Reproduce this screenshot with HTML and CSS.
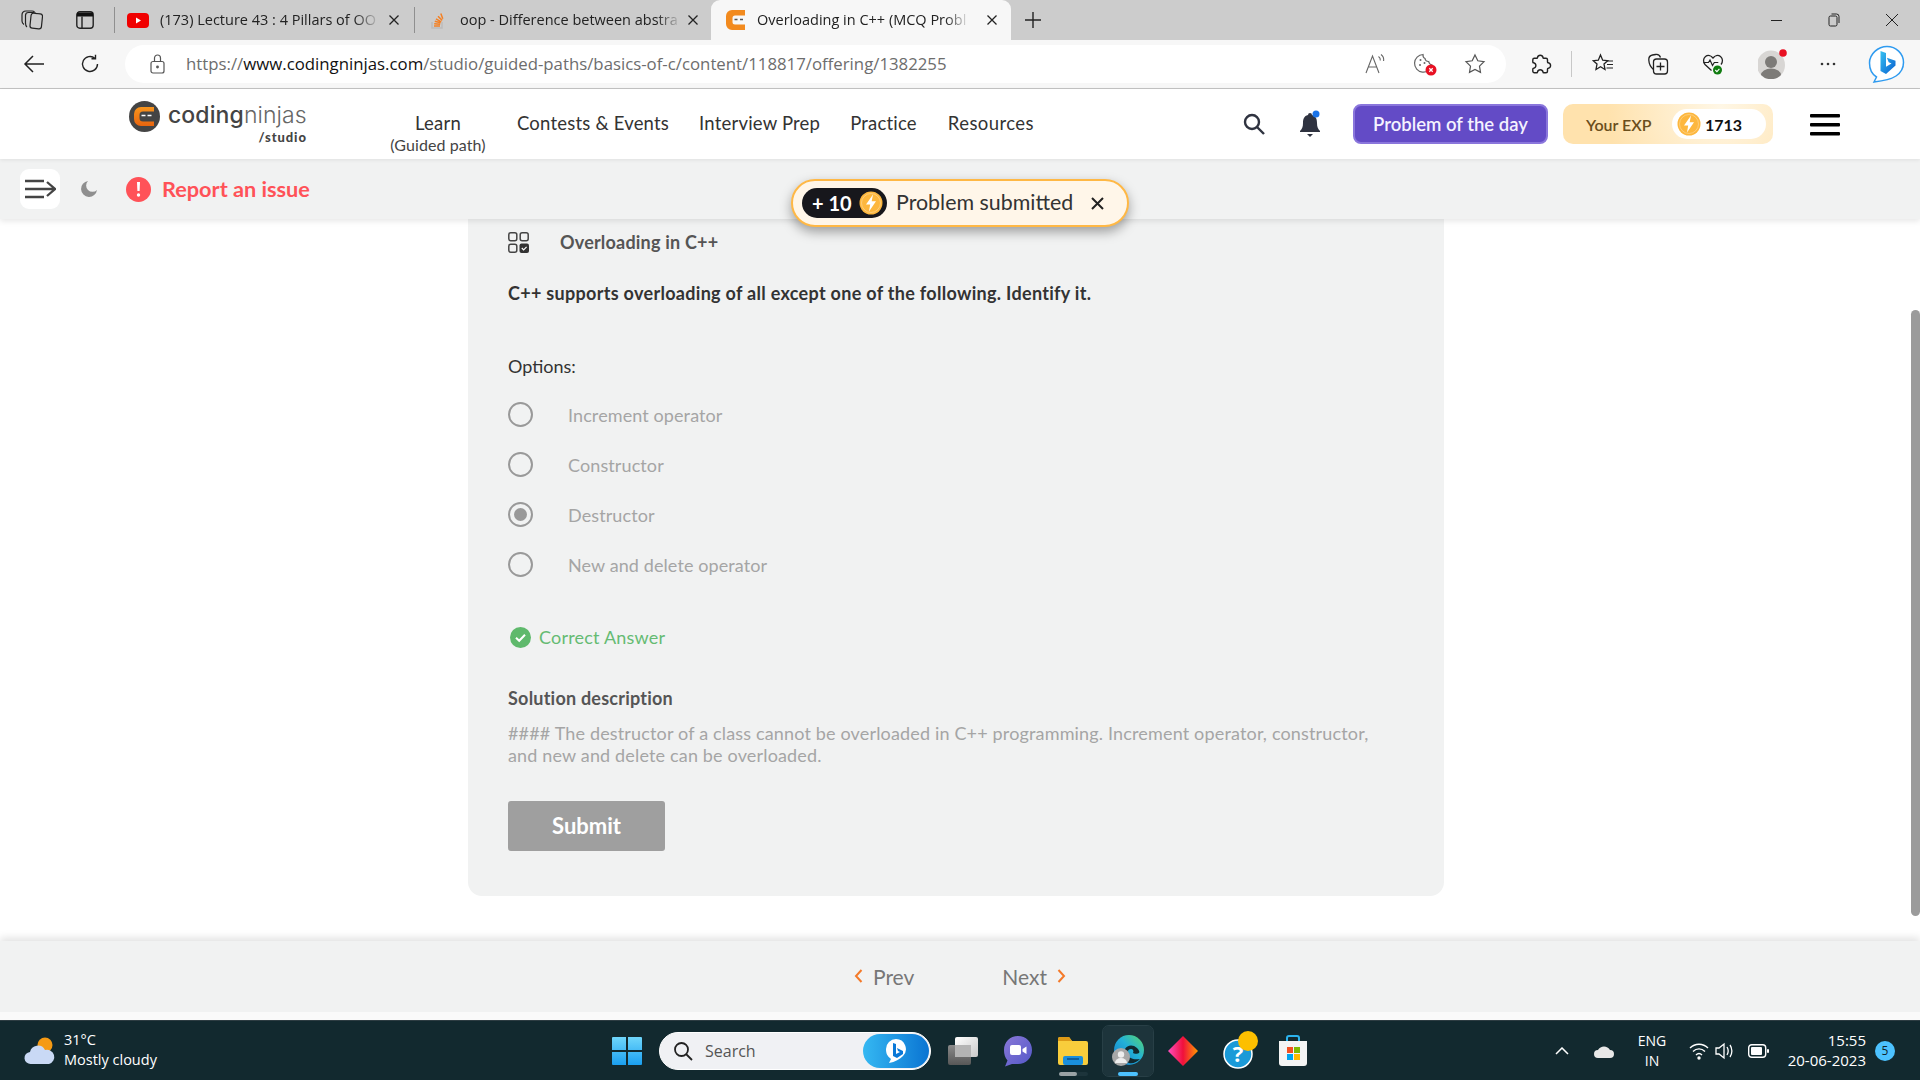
FILE: index.html
```html
<!DOCTYPE html>
<html lang="en">
<head>
<meta charset="utf-8">
<title>Overloading in C++ (MCQ Problem)</title>
<link rel="stylesheet" href="styles.css">
</head>
<body>
<svg class="defs" width="0" height="0" aria-hidden="true">
  <defs>
    <linearGradient id="logoOrange" x1="0" y1="0" x2="0" y2="1"><stop offset="0" stop-color="#f7941d"/><stop offset="1" stop-color="#e8650f"/></linearGradient>
    <linearGradient id="bingBlue" x1="0" y1="0" x2="1" y2="1"><stop offset="0" stop-color="#35c1f1"/><stop offset="1" stop-color="#0a5fd0"/></linearGradient>
    <linearGradient id="edgeG" x1="0" y1="1" x2="1" y2="0"><stop offset="0" stop-color="#1277c9"/><stop offset=".55" stop-color="#22b0d8"/><stop offset="1" stop-color="#5ad86a"/></linearGradient>
    <linearGradient id="winG" x1="0" y1="0" x2="0" y2="1"><stop offset="0" stop-color="#6fd6fb"/><stop offset="1" stop-color="#1a9ff0"/></linearGradient>
    <linearGradient id="diaG" x1="0" y1="0" x2="1" y2="0"><stop offset="0" stop-color="#ff4fc0"/><stop offset=".5" stop-color="#f0103c"/><stop offset="1" stop-color="#ff9a00"/></linearGradient>
    <linearGradient id="teamsG" x1="0" y1="0" x2="1" y2="1"><stop offset="0" stop-color="#8a78d8"/><stop offset="1" stop-color="#5358c8"/></linearGradient>
    <linearGradient id="glassA" x1="0" y1="0" x2="1" y2="1"><stop offset="0" stop-color="#ffffff"/><stop offset="1" stop-color="#c9c9c9"/></linearGradient>
    <linearGradient id="glassB" x1="0" y1="0" x2="0" y2="1"><stop offset="0" stop-color="#8a8a8a"/><stop offset="1" stop-color="#575757"/></linearGradient>
    <g id="bolt"><circle cx="12" cy="12" r="11.500" fill="#fdb73e"/><circle cx="12" cy="12" r="9.500" fill="none" stroke="#fff" stroke-opacity=".3"/><path d="M14 3.500 7 13.500h4.200L10 20.500l7-10.200h-4.300z" fill="#fff"/></g>
  </defs>
</svg>

<header class="tabstrip">
  <span class="strip-icon"><svg width="22" height="20" viewBox="0 0 22 20" fill="none" stroke="#222" stroke-width="1.200"><rect x="9.500" y="3.500" width="11.500" height="15" rx="2.500" transform="rotate(6 15 11)"/><path d="M6 17C4.500 16 4.500 15 4.500 13V5.500C4.500 3.500 5.500 2.500 7.500 2.500h5c1.500 0 2.300.5 3 1.500"/><path d="M3 14.500C1.500 13.500 1 12.500 1 11V5C1 2.500 2.500 1 5 1h6c1 0 1.800.2 2.500.8"/></svg></span>
  <span class="strip-icon strip-icon-second"><svg width="18" height="18" viewBox="0 0 18 18" fill="none" stroke="#222" stroke-width="1.400"><rect x=".8" y=".8" width="16.400" height="16.400" rx="3"/><path d="M1 3.500h16" stroke-width="4" stroke="#111"/><path d="M6 5.500v11.500"/></svg></span>
  <span class="tab-sep"></span>
  <div class="tab tab-yt">
    <svg class="favicon" width="22" height="15" viewBox="0 0 22 15"><rect width="22" height="15" rx="4" fill="#f00000"/><path d="M9 4.500v6l5-3z" fill="#fff"/></svg>
    <span class="tab-title">(173) Lecture 43 : 4 Pillars of OO</span>
    <svg class="tab-x" width="12" height="12" viewBox="0 0 12 12" stroke="#222" stroke-width="1.300"><path d="M1.500 1.500l9 9M10.500 1.500l-9 9"/></svg>
  </div>
  <span class="tab-sep"></span>
  <div class="tab tab-so">
    <svg class="favicon" width="16" height="18" viewBox="0 0 16 18" fill="none"><path d="M2 11v6h10v-6" stroke="#bcbbbb" stroke-width="1.500"/><path d="M4 15h6M4.200 12.700l6 .6M4.800 10.300l5.800 1.500M6 7.800l5.200 3M8 5.200l4.200 4.200M10.800 2.500l2 5.300" stroke="#f48024" stroke-width="1.500"/></svg>
    <span class="tab-title">oop - Difference between abstra</span>
    <svg class="tab-x" width="12" height="12" viewBox="0 0 12 12" stroke="#222" stroke-width="1.300"><path d="M1.500 1.500l9 9M10.500 1.500l-9 9"/></svg>
  </div>
  <div class="tab tab-active">
    <svg class="favicon" width="19" height="20" viewBox="0 0 19 20"><path d="M6 0h13v5.500H9A2.500 2.500 0 0 0 6.500 8v4A2.500 2.500 0 0 0 9 14.500h10V20H6a6 6 0 0 1-6-6V6a6 6 0 0 1 6-6z" fill="#f28a1e"/><path d="M8.500 9.500h3M14 9.500h3" stroke="#555" stroke-width="1.300"/></svg>
    <span class="tab-title">Overloading in C++ (MCQ Probl</span>
    <svg class="tab-x" width="12" height="12" viewBox="0 0 12 12" stroke="#222" stroke-width="1.300"><path d="M1.500 1.500l9 9M10.500 1.500l-9 9"/></svg>
  </div>
  <svg class="new-tab" width="16" height="16" viewBox="0 0 16 16" stroke="#222" stroke-width="1.400"><path d="M8 0v16M0 8h16"/></svg>
  <div class="window-controls">
    <svg width="12" height="12" viewBox="0 0 12 12" stroke="#222"><path d="M0 6.500h11"/></svg>
    <svg width="14" height="14" viewBox="0 0 14 14" fill="none" stroke="#222"><rect x="2" y="3" width="8" height="10" rx="1.500"/><path d="M4.500 1h5a2.500 2.500 0 0 1 2.500 2.500V10"/></svg>
    <svg width="14" height="14" viewBox="0 0 14 14" stroke="#222"><path d="M1 1l12 12M13 1 1 13"/></svg>
  </div>
</header>

<div class="addressbar">
  <span class="nav-btn"><svg width="22" height="20" viewBox="0 0 22 20" fill="none" stroke="#222" stroke-width="1.500"><path d="M21 10H2M10 2l-8 8 8 8"/></svg></span>
  <span class="nav-btn nav-btn-refresh"><svg width="20" height="20" viewBox="0 0 20 20" fill="none" stroke="#222" stroke-width="1.400"><path d="M17.500 10a7.500 7.500 0 1 1-2.500-5.600M15.500 0.800v4h-4"/></svg></span>
  <div class="urlpill">
    <svg class="lock" width="15" height="20" viewBox="0 0 15 20" fill="none" stroke="#555" stroke-width="1.200"><rect x="1" y="7.500" width="13" height="11.500" rx="2"/><path d="M4.500 7.500V4a3 3 0 0 1 6 0v3.500"/><circle cx="7.500" cy="13" r=".8" fill="#555"/></svg>
    <span class="url">https://<b>www.codingninjas.com</b>/studio/guided-paths/basics-of-c/content/118817/offering/1382255</span>
    <div class="pill-tools">
      <svg width="22" height="22" viewBox="0 0 22 22" fill="none" stroke="#666" stroke-width="1.100"><path d="M2 20 8.500 3l6.500 17M4.500 14h8"/><path d="M14.500 3.500c1.500 1 2 2.500 1.800 4M17 1.500c2 1.500 3 4 2.600 6.500"/></svg>
      <svg width="24" height="24" viewBox="0 0 24 24" fill="none"><path d="M10 2.500a8.800 8.800 0 1 0 9 10.500c-2-.5-3-1.500-3.300-3.500-2 .2-3.500-1-3.700-3-1.500-.8-2.200-2.200-2-4z" stroke="#666" stroke-width="1.200"/><circle cx="7.500" cy="8" r="1" fill="#666"/><circle cx="7" cy="13" r="1" fill="#666"/><circle cx="11.500" cy="11" r="1" fill="#666"/><circle cx="18" cy="18" r="5.500" fill="#e81123"/><path d="M16.300 16.300l3.400 3.400M19.700 16.300l-3.400 3.400" stroke="#fff" stroke-width="1.300"/></svg>
      <svg width="22" height="22" viewBox="0 0 22 22" fill="none" stroke="#555" stroke-width="1.200"><path d="m11 2 2.800 5.800 6.200.9-4.500 4.400 1 6.300L11 16.400 5.500 19.400l1-6.300L2 8.700l6.200-.9z"/></svg>
    </div>
  </div>
  <div class="tools">
    <span class="tool"><svg width="22" height="22" viewBox="0 0 22 22" fill="none" stroke="#222" stroke-width="1.400"><path d="M7.500 4.500a2.800 2.800 0 0 1 5.500 0c0 .5.3.8.8.8h2.200a1.500 1.500 0 0 1 1.500 1.500v2.200c0 .5.300.8.800.8a2.800 2.800 0 0 1 0 5.500c-.5 0-.8.3-.8.8v2.200a1.500 1.500 0 0 1-1.500 1.500h-2.200c-.5 0-.8-.3-.8-.8a2.800 2.800 0 0 0-5.500 0c0 .5-.3.8-.8.8H4.300a1.500 1.500 0 0 1-1.500-1.500v-2.200c0-.5.3-.8.8-.8a2.800 2.800 0 0 0 0-5.500c-.5 0-.8-.3-.8-.8V6.800a1.500 1.500 0 0 1 1.500-1.500h2.400c.5 0 .8-.3.800-.8z"/></svg></span>
    <span class="tool-sep"></span>
    <span class="tool"><svg width="22" height="22" viewBox="0 0 22 22" fill="none" stroke="#222" stroke-width="1.300"><path d="m8.500 2 2.200 5.200 5 .5-3.700 3.400 1 5.400-4.500-2.800L4 16.500l1-5.400L1.300 7.700l5-.5z"/><path d="M15 8h6M15 11.500h6M14.500 15h6.500" stroke-width="1.200"/></svg></span>
    <span class="tool"><svg width="22" height="22" viewBox="0 0 22 22" fill="none" stroke="#222" stroke-width="1.300"><path d="M6.500 16.500C3.500 14 2 11 1.800 7c-.2-3 1-4.500 3.700-5l3-.5c2.500-.4 4.300.7 5 3"/><rect x="6.500" y="6" width="14" height="15" rx="3"/><path d="M13.500 9.500v8M9.500 13.500h8"/></svg></span>
    <span class="tool"><svg width="22" height="22" viewBox="0 0 22 22" fill="none"><path d="M9.500 17.500 3 11.500C1 9 1 5.500 3.500 3.500 6 1.500 9 2.500 11 5c2-2.500 5-3.500 7.500-1.500C21 5.500 21 9 19 11.500" stroke="#222" stroke-width="1.300"/><path d="M1.500 9.500h5l1.500-2.500 2.500 5.500 1.800-3h4" stroke="#222" stroke-width="1.200"/><circle cx="15.500" cy="17" r="4.500" fill="#107c10"/><path d="m13.300 17 1.600 1.600 2.500-2.800" stroke="#fff" stroke-width="1.100"/></svg></span>
    <span class="tool tool-avatar"><svg width="30" height="30" viewBox="0 0 30 30"><ellipse cx="13" cy="16" rx="14" ry="14.500" fill="#d8d6d4"/><circle cx="13" cy="13" r="6" fill="#7d7b78"/><path d="M3 26a10 6.500 0 0 1 20 0 14 14 0 0 1-20 0z" fill="#7d7b78"/><circle cx="25" cy="4" r="3.800" fill="#e81123"/></svg></span>
    <span class="tool"><svg width="16" height="4" viewBox="0 0 16 4" fill="#333"><circle cx="2" cy="2" r="1.300"/><circle cx="8" cy="2" r="1.300"/><circle cx="14" cy="2" r="1.300"/></svg></span>
    <span class="tool"><svg width="38" height="38" viewBox="0 0 38 38" fill="none"><path d="M19 1.500c9 0 16.500 7 16.500 16 0 6-3 10.500-7.500 13.500-5 3.300-13 5-22 6l2.500-5C3.800 29 1.500 24 1.500 18 1.500 9 10 1.500 19 1.500z" fill="#fff" stroke="#2f9bf0" stroke-width="1.500"/><path d="M12.500 6l5.500 1.900v13.800l5.500-3.200-2.800-1.300-1.800-4.400 8.600 3v4.800L18 29l-5.500-3z" fill="url(#bingBlue)"/></svg></span>
  </div>
</div>

<nav class="siteheader">
  <div class="brand">
    <svg class="brand-mark" width="31" height="31" viewBox="0 0 31 31"><circle cx="15.500" cy="15.500" r="15.500" fill="#444"/><path d="M12 6h13v4.500H14a3.500 3.500 0 0 0-3.500 3.500v3a3.500 3.500 0 0 0 3.500 3.500h11V25H12a7 7 0 0 1-7-7v-5a7 7 0 0 1 7-7z" fill="url(#logoOrange)"/><path d="M12.500 14.500h4M18.500 14.500h4" stroke="#fff" stroke-width="1.500"/></svg>
    <div class="brand-text">
      <span class="brand-name"><b>coding</b>ninjas</span>
      <span class="brand-sub">/studio</span>
    </div>
  </div>
  <ul class="navlinks">
    <li class="nav-learn"><span>Learn</span><small>(Guided path)</small></li>
    <li>Contests &amp; Events</li>
    <li>Interview Prep</li>
    <li>Practice</li>
    <li>Resources</li>
  </ul>
  <div class="header-actions">
    <svg class="search-icon" width="24" height="24" viewBox="0 0 24 24" fill="none" stroke="#2f3340" stroke-width="2.400"><circle cx="10" cy="10" r="7"/><path d="m15 15 7 7"/></svg>
    <svg class="bell-icon" width="24" height="28" viewBox="0 0 24 28"><path d="M12 3a2 2 0 0 1 2 2c4 1 5 4 5 8 0 4 1 6 3 8v1H2v-1c2-2 3-4 3-8 0-4 1-7 5-8a2 2 0 0 1 2-2z" fill="#2f3340"/><path d="M9 24h6l-3 3z" fill="#2f3340"/><circle cx="18" cy="4" r="3.500" fill="#1a73e8"/></svg>
    <button class="potd">Problem of the day</button>
    <div class="exp">
      <span class="exp-label">Your EXP</span>
      <span class="exp-value"><svg width="24" height="24" viewBox="0 0 24 24"><use href="#bolt"/></svg><b>1713</b></span>
    </div>
    <svg class="burger" width="30" height="22" viewBox="0 0 30 22" fill="#000"><rect width="30" height="3.500" rx="1"/><rect y="9" width="30" height="3.500" rx="1"/><rect y="18" width="30" height="3.500" rx="1"/></svg>
  </div>
</nav>

<div class="subheader">
  <span class="menu-btn"><svg width="32" height="20" viewBox="0 0 32 20" fill="none" stroke="#444" stroke-width="2.300"><path d="M1 2h19M1 10h29M1 18h19M23 3l8 7-8 7"/></svg></span>
  <svg class="moon" width="16" height="16" viewBox="0 0 16 16"><path d="M7 0a6 6 0 0 0 9 9A8 8 0 1 1 7 0z" fill="#8f8f8f"/></svg>
  <svg class="alert" width="25" height="25" viewBox="0 0 25 25"><circle cx="12.500" cy="12.500" r="12.500" fill="#ff5258"/><path d="M11 5h3l-.4 9h-2.200z" fill="#fff"/><circle cx="12.500" cy="18" r="1.700" fill="#fff"/></svg>
  <span class="report">Report an issue</span>
</div>

<main class="content">
  <section class="card">
    <div class="card-head">
      <svg width="21" height="21" viewBox="0 0 21 21" fill="none" stroke="#444" stroke-width="1.500"><rect x=".8" y=".8" width="8" height="8" rx="2"/><rect x="12.200" y=".8" width="8" height="8" rx="2"/><rect x=".8" y="12.200" width="8" height="8" rx="2"/><rect x="11.500" y="11.500" width="9.500" height="9.500" rx="2" fill="#333" stroke="none"/><path d="m13.800 16 1.800 1.800 3-3" stroke="#fff" stroke-width="1.200"/></svg>
      <span>Overloading in C++</span>
    </div>
    <p class="question">C++ supports overloading of all except one of the following. Identify it.</p>
    <p class="options-title">Options:</p>
    <ul class="options">
      <li><span class="radio"></span>Increment operator</li>
      <li><span class="radio"></span>Constructor</li>
      <li><span class="radio radio-on"></span>Destructor</li>
      <li><span class="radio"></span>New and delete operator</li>
    </ul>
    <div class="correct">
      <svg width="21" height="21" viewBox="0 0 21 21"><circle cx="10.500" cy="10.500" r="10.500" fill="#5fb96c"/><path d="m6 10.800 3.200 3 5.800-6" fill="none" stroke="#fff" stroke-width="2"/></svg>
      <span>Correct Answer</span>
    </div>
    <h2 class="sol-title">Solution description</h2>
    <p class="sol-text">#### The destructor of a class cannot be overloaded in C++ programming. Increment operator, constructor, and new and delete can be overloaded.</p>
    <button class="submit">Submit</button>
  </section>
</main>

<footer class="pager">
  <span class="pager-link"><svg width="9" height="14" viewBox="0 0 9 14" fill="none" stroke="#f47a2a" stroke-width="2"><path d="M7.500 1 2 7l5.500 6"/></svg>Prev</span>
  <span class="pager-link">Next<svg width="9" height="14" viewBox="0 0 9 14" fill="none" stroke="#f47a2a" stroke-width="2"><path d="M1.500 1 7 7l-5.500 6"/></svg></span>
</footer>
<div class="pager-strip"></div>

<div class="taskbar">
  <div class="weather">
    <svg width="32" height="30" viewBox="0 0 32 30"><circle cx="21" cy="9" r="7.500" fill="#f59a14"/><path d="M7 28a6 6 0 0 1-1-12 8 8 0 0 1 15-2 7 7 0 0 1 4 14z" fill="#c9d9f5"/></svg>
    <div class="weather-text"><span>31°C</span><span>Mostly cloudy</span></div>
  </div>
  <div class="task-center">
    <svg class="win" width="30" height="30" viewBox="0 0 30 30" fill="url(#winG)"><path d="M1 1h13v13H0V2a1 1 0 0 1 1-1zM16 1h13a1 1 0 0 1 1 1v12H16zM0 16h14v13H1a1 1 0 0 1-1-1zM16 16h14v12a1 1 0 0 1-1 1H16z"/></svg>
    <div class="task-search">
      <svg width="20" height="20" viewBox="0 0 20 20" fill="none" stroke="#222" stroke-width="1.800"><circle cx="8.500" cy="8.500" r="6.500"/><path d="m13 13 6 6"/></svg>
      <span>Search</span>
      <span class="task-bing"><svg width="22" height="26" viewBox="0 0 22 26"><path d="M11 1a10 10 0 0 1 7 17c-3 3-8 6-14 7l2-4C2 18 1 15 1 11A10 10 0 0 1 11 1z" fill="#fff"/><path d="M8 5l3 1v10l4-2-2-1-1-3 6 3v3l-6 4-4-2z" fill="#0a78d7"/></svg></span>
    </div>
    <span class="app app-files"><svg width="32" height="30" viewBox="0 0 32 30"><rect x="1" y="9" width="23" height="20" rx="2" fill="url(#glassB)"/><rect x="8" y="1" width="23" height="20" rx="2" fill="url(#glassA)"/><rect x="8" y="9" width="16" height="12" fill="#b4b4b4"/></svg></span>
    <span class="app"><svg width="30" height="32" viewBox="0 0 30 32"><path d="M15 1c8 0 14 6 14 14 0 8-6 14-14 14H9l-7 2.500 2.500-6C2 23 1 19 1 15 1 7 7 1 15 1z" fill="url(#teamsG)"/><rect x="7" y="10" width="11" height="10" rx="2" fill="#fff"/><path d="m19.500 14 4-2.500v7.500l-4-2.500z" fill="#fff"/></svg></span>
    <span class="app app-folder"><svg width="30" height="28" viewBox="0 0 30 28"><path d="M0 2a2 2 0 0 1 2-2h9l3 4h14a2 2 0 0 1 2 2v20a2 2 0 0 1-2 2H2a2 2 0 0 1-2-2z" fill="#f8cd3c"/><path d="M0 2a2 2 0 0 1 2-2h9l3 4H0z" fill="#dd9a17"/><rect x="5" y="19" width="20" height="9" rx="2" fill="#1a8fdc"/><rect x="9" y="21" width="12" height="2" fill="#0c5e9e"/></svg><i class="dot dot-gray"></i></span>
    <span class="app app-edge"><svg width="32" height="32" viewBox="0 0 32 32"><circle cx="17" cy="15" r="15" fill="url(#edgeG)"/><path d="M13 14c2-4 8-5 12-1 2 2 3 4 2 5-1 1-5 1-6 0 1-2 0-4-2-4-3 0-4 3-3 6 1 3 5 5 12 4-3 3-7 5-11 4-4-1-6-9-4-14z" fill="#12292f"/><circle cx="9" cy="22" r="9" fill="#a8a8a8"/><circle cx="9" cy="19.500" r="3.200" fill="#eee"/><path d="M3 28a6 5 0 0 1 12 0z" fill="#eee"/></svg><i class="dot dot-blue"></i></span>
    <span class="app"><svg width="30" height="30" viewBox="0 0 30 30"><path d="M15 0 30 15 15 30 0 15z" fill="url(#diaG)"/></svg></span>
    <span class="app"><svg width="40" height="40" viewBox="0 0 40 40"><circle cx="20" cy="23" r="14" fill="#1a9ad8" stroke="#fff" stroke-width="1.500"/><text class="help-q" x="20" y="31" text-anchor="middle">?</text><circle cx="30" cy="10" r="10" fill="#fdbf00"/></svg></span>
    <span class="app"><svg width="30" height="32" viewBox="0 0 30 32"><path d="M9 7V3a2 2 0 0 1 2-2h8a2 2 0 0 1 2 2v4" fill="none" stroke="#2bb3ee" stroke-width="2"/><path d="M1 6h28v22a3 3 0 0 1-3 3H4a3 3 0 0 1-3-3z" fill="#f4f4f4"/><rect x="9" y="12" width="6" height="6" fill="#f25022"/><rect x="16" y="12" width="6" height="6" fill="#7fba00"/><rect x="9" y="19" width="6" height="6" fill="#00a4ef"/><rect x="16" y="19" width="6" height="6" fill="#ffb900"/></svg></span>
  </div>
  <div class="tray">
    <svg class="tray-chev" width="14" height="8" viewBox="0 0 14 8" fill="none" stroke="#fff" stroke-width="1.500"><path d="m1 7 6-6 6 6"/></svg>
    <svg class="tray-cloud" width="22" height="14" viewBox="0 0 22 14"><path d="M5 14a4 4 0 0 1 0-8 7 7 0 0 1 12 0 4 4 0 0 1 0 8z" fill="#e8e8e8"/></svg>
    <div class="tray-lang"><span>ENG</span><span>IN</span></div>
    <svg class="tray-wifi" width="20" height="18" viewBox="0 0 20 18" fill="none" stroke="#fff" stroke-width="1.400"><path d="M1 6c5-5 13-5 18 0M4 9.500c3.500-3.500 8.500-3.500 12 0M7 13c2-2 4-2 6 0"/><circle cx="10" cy="16" r="1" fill="#fff"/></svg>
    <svg class="tray-vol" width="20" height="18" viewBox="0 0 20 18" fill="none" stroke="#fff" stroke-width="1.300"><path d="M1 6h3l5-4v14l-5-4H1z"/><path d="M12 5c1.500 2.500 1.500 5.500 0 8M15 3c2.500 3.500 2.500 8.500 0 12"/></svg>
    <svg class="tray-bat" width="21" height="14" viewBox="0 0 21 14"><rect x=".7" y=".7" width="17" height="12.600" rx="3" fill="none" stroke="#fff" stroke-width="1.400"/><rect x="3" y="3" width="11" height="8" rx="1" fill="#fff"/><rect x="19" y="5" width="2" height="4" rx="1" fill="#fff"/></svg>
    <div class="tray-clock"><span>15:55</span><span>20-06-2023</span></div>
    <span class="tray-badge">5</span>
  </div>
</div>

<div class="toast">
  <span class="toast-points">+ 10<svg width="24" height="24" viewBox="0 0 24 24"><use href="#bolt"/></svg></span>
  <span class="toast-text">Problem submitted</span>
  <svg width="13" height="13" viewBox="0 0 13 13" stroke="#222" stroke-width="2"><path d="m1 1 11 11M12 1 1 12"/></svg>
</div>
<div class="scrollthumb"></div>
</body>
</html>
```

FILE: styles.css
```css
* { box-sizing: border-box; }
html, body { margin: 0; padding: 0; }
body {
  width: 1920px;
  height: 1080px;
  overflow: hidden;
  display: flex;
  flex-direction: column;
  position: relative;
  background: #fff;
  font-family: "Lato", "Noto Sans", sans-serif;
  color: #333;
}
ul { list-style: none; margin: 0; padding: 0; }
p, h2 { margin: 0; }
button { font-family: inherit; border: 0; }
.defs { position: absolute; }
svg { display: block; flex: none; }

/* browser tab strip */
.tabstrip {
  height: 40px;
  flex: none;
  display: flex;
  align-items: center;
  background: #cccccc;
  font-family: "Open Sans", sans-serif;
  font-size: 14.500px;
  color: #222;
}
.strip-icon { width: 32px; display: flex; justify-content: center; margin-left: 16px; }
.strip-icon-second { margin-left: 21px; }
.tab-sep { width: 1px; height: 26px; background: #8f8f8f; }
.strip-icon-second + .tab-sep { margin-left: 13px; }
.tab {
  width: 299px;
  height: 40px;
  display: flex;
  align-items: center;
  padding: 0 14px 0 12px;
  gap: 11px;
}
.tab-so { width: 296px; padding: 0 12px 0 15px; gap: 14px; }
.tab-so .tab-x { margin-left: -10px; margin-right: 0; }
.tab-active {
  width: 300px;
  background: #f7f7f7;
  border-radius: 9px 9px 0 0;
  padding: 0 13px 0 15px;
  gap: 12px;
}
.tab-title {
  margin-right: auto;
  padding-bottom: 1px;
  white-space: nowrap;
  -webkit-mask-image: linear-gradient(90deg, #000 90%, rgba(0,0,0,.15) 100%);
  mask-image: linear-gradient(90deg, #000 90%, rgba(0,0,0,.15) 100%);
}
.new-tab { margin-left: 14px; }
.window-controls {
  margin-left: auto;
  width: 128px;
  margin-right: 21px;
  display: flex;
  justify-content: space-between;
  align-items: center;
}

/* browser address bar */
.addressbar {
  height: 49px;
  flex: none;
  display: flex;
  align-items: center;
  background: #f7f7f7;
  border-bottom: 1px solid #c4c4c4;
}
.nav-btn { width: 44px; margin-left: 12px; display: flex; justify-content: center; }
.nav-btn-refresh { margin-left: 12px; }
.urlpill {
  width: 1381px;
  height: 38px;
  margin-left: 13px;
  padding: 0 20px 0 25px;
  display: flex;
  align-items: center;
  background: #fff;
  border-radius: 19px;
}
.url {
  margin-left: 21px;
  padding-bottom: 1px;
  font-family: "Open Sans", sans-serif;
  font-size: 16.800px;
  letter-spacing: 0;
  color: #6d6d6d;
  white-space: nowrap;
}
.url b { font-weight: 400; color: #111; }
.pill-tools { margin-left: auto; display: flex; align-items: center; gap: 27px; }
.tools {
  margin-left: 7px;
  display: grid;
  grid-template-columns: 55px 7px 55px 55px 55px 59px 58px 60px;
  align-items: center;
}
.tool { display: flex; justify-content: center; align-items: center; }
.tool-avatar svg { margin-left: 6px; }
.tool-sep { width: 1px; height: 26px; background: #c8c8c8; margin-left: 3px; }

/* site header */
.siteheader {
  height: 70px;
  flex: none;
  display: flex;
  position: relative;
  z-index: 3;
  background: #fff;
  box-shadow: 0 1px 4px rgba(0,0,0,.08);
}
.brand { display: flex; margin-left: 129px; padding-top: 12px; gap: 8px; width: 180px; }
.brand-text { display: flex; flex-direction: column; align-items: flex-end; }
.brand-name {
  font-family: "Inter", sans-serif;
  font-weight: 300;
  font-size: 23px;
  line-height: 28px;
  letter-spacing: .1px;
  color: #666;
}
.brand-name b { font-weight: 500; color: #444; }
.brand-sub { font-size: 13px; line-height: 16px; font-weight: 900; letter-spacing: .9px; color: #444; }
.navlinks {
  display: flex;
  align-items: flex-start;
  gap: 30px;
  margin-left: 80px;
  padding-top: 22px;
  font-size: 18.500px;
  letter-spacing: .2px;
  line-height: 24px;
  color: #333;
}
.navlinks li { white-space: nowrap; }
.navlinks li:last-child { letter-spacing: .4px; margin-left: 1px; }
.nav-learn { width: 98px; display: flex; flex-direction: column; align-items: center; }
.nav-learn small { font-size: 16px; line-height: 20px; letter-spacing: .1px; color: #444; }
.header-actions { margin-left: auto; margin-right: 80px; display: flex; align-items: center; }
.search-icon { margin-right: 32px; }
.bell-icon { margin-right: 31px; }
.potd {
  width: 195px;
  height: 40px;
  background: #634bc6;
  border: 2px solid #8a76dc;
  border-radius: 8px;
  color: #f4f2ff;
  font-size: 18.500px;
  font-weight: 600;
}
.exp {
  width: 210px;
  height: 40px;
  margin-left: 15px;
  padding: 0 7px 0 23px;
  border-radius: 10px;
  display: flex;
  align-items: center;
  justify-content: space-between;
  background: radial-gradient(circle at 75% 10%, #fff7e6 0, #ffe2ad 70%);
  font-size: 16px;
}
.exp-label { color: #6b4e1c; font-weight: 600; }
.exp-value {
  width: 94px;
  height: 30px;
  display: flex;
  align-items: center;
  gap: 4px;
  padding-left: 5px;
  background: #fff;
  border-radius: 15px;
  color: #111;
}
.burger { margin-left: 37px; margin-top: 2px; }

/* sub header */
.subheader {
  height: 60px;
  flex: none;
  display: flex;
  align-items: center;
  padding-left: 20px;
  position: relative;
  z-index: 2;
  background: #f1f2f2;
  box-shadow: 0 2px 6px rgba(0,0,0,.1);
}
.menu-btn {
  width: 40px;
  height: 40px;
  display: flex;
  align-items: center;
  justify-content: center;
  background: #fff;
  border-radius: 9px;
}
.moon { margin-left: 21px; }
.alert { margin-left: 29px; }
.report { margin-left: 11px; font-size: 21.700px; font-weight: 700; color: #ff5258; }

/* question card */
.content { flex: 1; min-height: 0; }
.card {
  width: 976px;
  margin-left: 468px;
  padding: 11px 40px 45px;
  background: #f1f2f2;
  border-radius: 0 0 14px 14px;
  font-size: 18px;
  letter-spacing: .2px;
}
.card-head { display: flex; align-items: center; gap: 31px; height: 24px; font-weight: 700; color: #555; }
.question { margin-top: 27px; line-height: 24px; font-weight: 700; letter-spacing: .3px; color: #333; }
.options-title { margin-top: 49px; line-height: 24px; color: #333; letter-spacing: 0; }
.options { margin-top: 12px; color: #a5a5a5; letter-spacing: .1px; }
.options li { height: 50px; display: flex; align-items: center; gap: 35px; }
.radio { width: 25px; height: 25px; border: 2px solid #999; border-radius: 50%; position: relative; top: -1px; display: flex; align-items: center; justify-content: center; }
.radio-on::after { content: ""; width: 13px; height: 13px; border-radius: 50%; background: #999; }
.correct { margin: 35px 0 0 2px; height: 24px; display: flex; align-items: center; gap: 8px; color: #65bb72; }
.sol-title { margin-top: 37px; font-size: 18px; line-height: 24px; font-weight: 700; color: #555; letter-spacing: .22px; }
.sol-text { margin-top: 12px; line-height: 22px; letter-spacing: .16px; color: #a5a5a5; max-width: 880px; }
.submit {
  display: block;
  width: 157px;
  height: 50px;
  margin-top: 35px;
  padding: 0 0 2px;
  background: #9f9f9f;
  border-radius: 3px;
  color: #fff;
  font-size: 22px;
  font-weight: 700;
}

/* pager */
.pager {
  height: 71px;
  flex: none;
  display: flex;
  justify-content: center;
  align-items: center;
  gap: 88px;
  padding-bottom: 1px;
  background: #f1f2f2;
  box-shadow: 0 -3px 8px rgba(0,0,0,.12);
  font-size: 21px;
  color: #777;
}
.pager-link { display: flex; align-items: center; gap: 10px; }
.pager-strip { height: 8px; flex: none; background: #fafafa; }

/* windows taskbar */
.taskbar {
  height: 60px;
  flex: none;
  display: flex;
  align-items: center;
  position: relative;
  background: #12292f;
  border-top: 1px solid #2d3c42;
  font-family: "Open Sans", sans-serif;
  color: #fff;
  font-size: 14px;
}
.weather { width: 612px; padding-left: 24px; display: flex; align-items: center; gap: 8px; }
.weather-text { display: flex; flex-direction: column; line-height: 20px; font-size: 14.500px; padding-bottom: 2px; }
.task-center { display: flex; align-items: center; }
.task-search {
  width: 272px;
  height: 38px;
  margin-left: 17px;
  padding-left: 13px;
  display: flex;
  align-items: center;
  gap: 12px;
  background: #f0f1f4;
  border-radius: 19px;
  border: 1px solid #fff;
  color: #555;
  font-size: 16px;
}
.task-bing {
  margin-left: auto;
  margin-right: 1px;
  width: 66px;
  height: 34px;
  display: flex;
  align-items: center;
  justify-content: center;
  border-radius: 17px;
  background: linear-gradient(90deg, #35b8f2, #0a74d2);
}
.app {
  width: 50px;
  height: 50px;
  margin-left: 5px;
  display: flex;
  align-items: center;
  justify-content: center;
  position: relative;
  border-radius: 6px;
}
.app-files { margin-left: 7px; }
.app-edge { background: #1d343b; outline: 1px solid #283f46; }
.dot { position: absolute; bottom: 0; height: 4px; border-radius: 2px; }
.dot-gray { width: 18px; left: 11px; background: #9aa2a5; box-shadow: 11px 0 0 0 #1d343b; }
.dot-blue { width: 20px; background: #4cc2ff; }
.help-q { font: 700 22px "Open Sans", sans-serif; fill: #fff; }
.tray { position: absolute; top: 0; right: 0; bottom: 0; left: 1555px; display: flex; align-items: center; }
.tray-cloud { margin-left: 24px; }
.tray-lang { margin-left: 19px; width: 36px; text-align: center; display: flex; flex-direction: column; line-height: 20px; }
.tray-wifi { margin-left: 19px; }
.tray-vol { margin-left: 6px; }
.tray-bat { margin-left: 13px; }
.tray-clock { margin-left: 10px; width: 87px; display: flex; flex-direction: column; align-items: flex-end; line-height: 20px; font-size: 15px; padding-bottom: 2px; }
.tray-badge {
  margin-left: 9px;
  width: 20px;
  height: 20px;
  border-radius: 50%;
  background: #4cc2ff;
  color: #10252b;
  font-size: 12px;
  line-height: 20px;
  text-align: center;
}

/* toast */
.toast {
  position: absolute;
  left: 791px;
  top: 179px;
  z-index: 5;
  width: 338px;
  height: 48px;
  padding-left: 9px;
  display: flex;
  align-items: center;
  background: #fff6e9;
  border: 2px solid #ffb845;
  border-radius: 24px;
  box-shadow: 0 5px 12px rgba(0,0,0,.35);
}
.toast-points {
  width: 85px;
  height: 30px;
  padding: 0 4px 0 10px;
  display: flex;
  align-items: center;
  justify-content: space-between;
  background: #17171c;
  border-radius: 15px;
  color: #fff;
  font-size: 20px;
  font-weight: 700;
}
.toast-text { margin: 0 18px 2px 9px; font-size: 21.400px; color: #333; white-space: nowrap; }

.scrollthumb {
  position: absolute;
  right: 0;
  top: 310px;
  width: 9px;
  height: 606px;
  border-radius: 5px;
  background: #9b9b9b;
}
```
